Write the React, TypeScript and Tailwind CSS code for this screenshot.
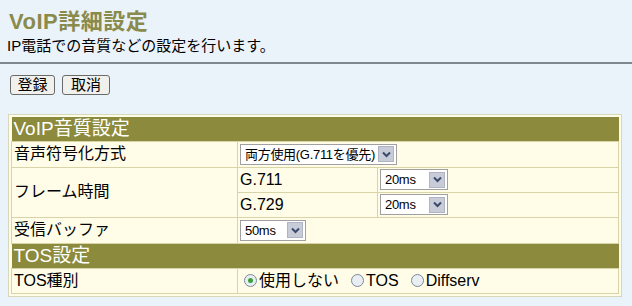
import React from "react";

const font = { fontFamily: '"Liberation Sans", "Noto Sans CJK JP", sans-serif' };

function Select({ label, width }: { label: string; width: number }) {
  return (
    <div
      className="flex items-center h-[21px] border border-[#a0a0a0] bg-white pl-[4px] pr-[2px] gap-[3px]"
      style={{ width }}
    >
      <span className="flex-1 min-w-0 overflow-hidden text-[13px] leading-[19px] text-black whitespace-nowrap tracking-[-0.3px]">
        {label}
      </span>
      <span className="shrink-0 w-[16px] h-[16px] bg-[#c8ccd8] border border-[#b0b4c0] flex items-center justify-center">
        <svg width="9" height="7" viewBox="0 0 9 7">
          <path d="M1 1.5 L4.5 5 L8 1.5" stroke="#3a4a6a" strokeWidth="2" fill="none" />
        </svg>
      </span>
    </div>
  );
}

function Radio({ checked, label }: { checked?: boolean; label: string }) {
  return (
    <span className="flex items-center gap-[2px]">
      <span className="w-[13px] h-[13px] rounded-full border border-[#7a8a9a] bg-[#e8eef2] flex items-center justify-center">
        {checked && <span className="w-[5px] h-[5px] rounded-full bg-[#3aa03a]" />}
      </span>
      <span className="text-[16px] leading-[20px]">{label}</span>
    </span>
  );
}

export default function App() {
  const cell = "border border-[#d8d4a8] px-[2px] font-normal";
  const head = "bg-[#8c8a3c] text-white text-[19px] leading-[22px] px-[2px]";
  return (
    <div className="w-[632px] h-[306px] bg-[#eaf2fa] overflow-hidden text-black" style={font}>
      <div className="pl-[9px] pt-[9px] text-[22px] leading-[26px] font-bold text-[#8a8a4a] tracking-[0.5px]">
        VoIP詳細設定
      </div>
      <div className="pl-[7px] text-[15px] leading-[20px] mt-[1px]">IP電話での音質などの設定を行います。</div>
      <div className="mt-[6px] border-t-2 border-[#7f8890]" />
      <div className="flex gap-[7px] pl-[10px] mt-[11px]">
        <button className="w-[45px] h-[20px] border border-[#6a6a6a] rounded-[3px] bg-[#f0f0ec] text-[15px] leading-[18px]">
          登録
        </button>
        <button className="w-[48px] h-[20px] border border-[#6a6a6a] rounded-[3px] bg-[#f0f0ec] text-[15px] leading-[18px]">
          取消
        </button>
      </div>
      <div className="ml-[8px] mt-[19px] w-[614px] border border-[#d8d8b8] bg-[#fffde8] p-[2px]">
        <table className="w-full border-collapse bg-[#fffde8] text-[16px]">
          <colgroup>
            <col className="w-[226px]" />
            <col className="w-[140px]" />
            <col />
          </colgroup>
          <tbody>
            <tr className="h-[24px]">
              <td colSpan={3} className={head}>VoIP音質設定</td>
            </tr>
            <tr className="h-[26px]">
              <td className={cell}>音声符号化方式</td>
              <td colSpan={2} className={cell}>
                <Select label="両方使用(G.711を優先)" width={157} />
              </td>
            </tr>
            <tr className="h-[25px]">
              <td rowSpan={2} className={cell}>フレーム時間</td>
              <td className={cell}>G.711</td>
              <td className={cell}>
                <Select label="20ms" width={68} />
              </td>
            </tr>
            <tr className="h-[25px]">
              <td className={cell}>G.729</td>
              <td className={cell}>
                <Select label="20ms" width={68} />
              </td>
            </tr>
            <tr className="h-[26px]">
              <td className={cell}>受信バッファ</td>
              <td colSpan={2} className={cell}>
                <Select label="50ms" width={66} />
              </td>
            </tr>
            <tr className="h-[25px]">
              <td colSpan={3} className={head}>TOS設定</td>
            </tr>
            <tr className="h-[22px]">
              <td className={cell}>TOS種別</td>
              <td colSpan={2} className={cell}>
                <div className="flex items-center gap-[12px] pl-[4px]">
                  <Radio checked label="使用しない" />
                  <Radio label="TOS" />
                  <Radio label="Diffserv" />
                </div>
              </td>
            </tr>
          </tbody>
        </table>
      </div>
    </div>
  );
}
